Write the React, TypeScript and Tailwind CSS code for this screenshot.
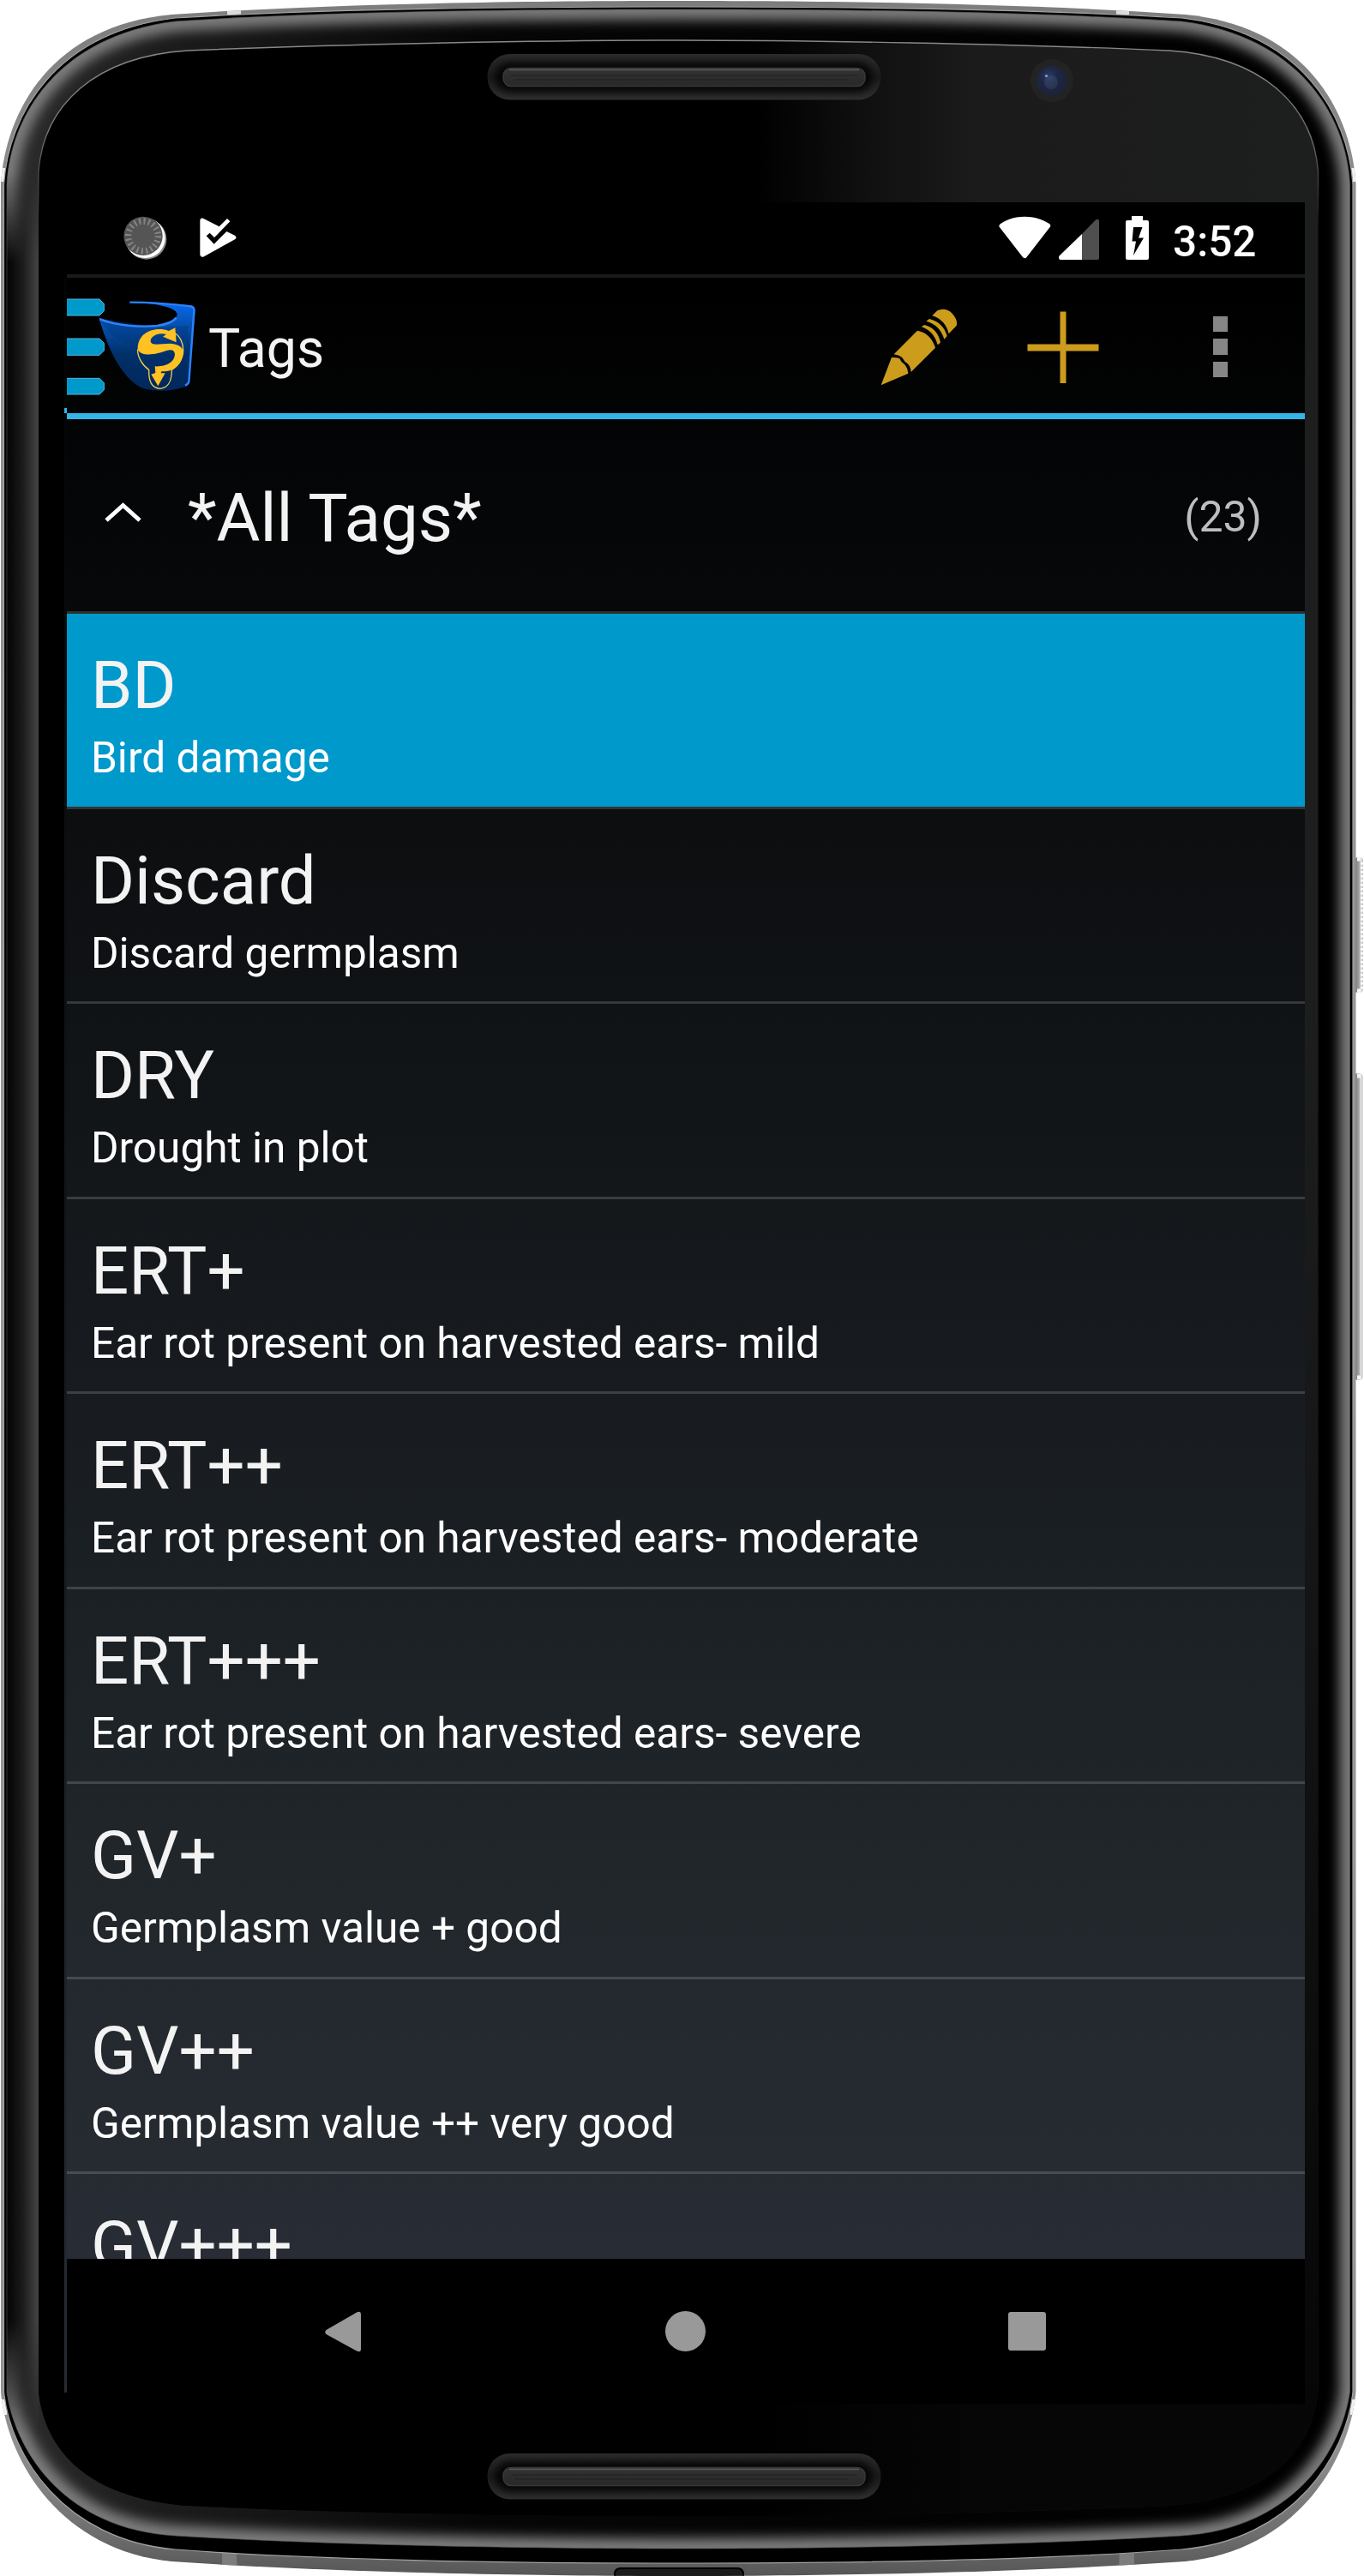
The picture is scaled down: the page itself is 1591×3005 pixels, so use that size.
const tags = [
  { name: "BD", note: "Bird damage", selected: true },
  { name: "Discard", note: "Discard germplasm" },
  { name: "DRY", note: "Drought in plot" },
  { name: "ERT+", note: "Ear rot present on harvested ears- mild" },
  { name: "ERT++", note: "Ear rot present on harvested ears- moderate" },
  { name: "ERT+++", note: "Ear rot present on harvested ears- severe" },
  { name: "GV+", note: "Germplasm value + good" },
  { name: "GV++", note: "Germplasm value ++ very good" },
  { name: "GV+++" },
];

const BODY_WIDTH = 1582.5;

type Point = [number, number];

/* Builds a left/right symmetric outline from the curve points of its left half,
   listed from the left edge to the centre. */
function outline(top: Point[], bottom: Point[]) {
  const flip = ([x, y]: Point): Point => [BODY_WIDTH - x, y];
  const curve = (pts: Point[]) => "C" + pts.map((p) => p.join(",")).join(" ");
  return [
    "M" + top[0].join(","),
    curve(top.slice(1)),
    curve(top.slice(0, -1).reverse().map(flip)),
    "L" + flip(bottom[0]).join(","),
    curve(bottom.slice(1).map(flip)),
    curve(bottom.slice(0, -1).reverse()),
    "Z",
  ].join(" ");
}

const shell = outline(
  [[1, 215], [6, 130], [60, 30], [200, 17], [400, 3], [650, 1], [791, 1]],
  [[1, 2790], [8, 2870], [70, 2975], [200, 2988], [400, 3002], [650, 3005], [791, 3005]],
);
const band = outline(
  [[4.5, 215], [10, 133], [65, 38], [204, 21], [400, 9], [650, 8], [791, 8]],
  [[4.5, 2790], [12, 2865], [75, 2963], [204, 2974], [400, 2989], [650, 2990], [791, 2990]],
);
const bevel = outline(
  [[8, 215], [12, 135], [68, 42], [204, 25], [400, 12], [650, 11], [791, 11]],
  [[8, 2790], [18, 2860], [75, 2950], [204, 2958], [400, 2970], [650, 2973], [791, 2973]],
);
const face = outline(
  [[45, 200], [51, 123], [110, 66], [219, 59], [400, 51], [650, 47], [791, 47]],
  [[45, 2790], [53, 2865], [110, 2915], [219, 2923], [400, 2932], [650, 2935], [791, 2935]],
);

function Speaker({ y }: { y: number }) {
  return (
    <g transform={`translate(0 ${y})`}>
      <rect x="568.5" y="0" width="459" height="53.5" rx="26" fill="url(#slotOuter)" />
      <rect x="577" y="9" width="441" height="36" rx="18" fill="#060606" filter="url(#soft3)" opacity="0.8" />
      <rect x="587" y="16.5" width="422" height="21" rx="9" fill="url(#slotInner)" stroke="#383838" strokeWidth="1.5" />
      <path d="M594 18.5H1002" stroke="#5a5a5a" strokeWidth="1.5" />
      <path d="M596 25H1000M600 30H990" stroke="#202020" strokeWidth="1" />
    </g>
  );
}

function PhoneBody() {
  return (
    <svg className="absolute inset-0" width="1591" height="3005" viewBox="0 0 1591 3005" aria-hidden="true">
      <defs>
        <linearGradient id="metal" x1="0" y1="0" x2="0" y2="1">
          <stop offset="0" stopColor="#7c7e7c" />
          <stop offset="0.06" stopColor="#8a8c8b" />
          <stop offset="0.5" stopColor="#969897" />
          <stop offset="0.95" stopColor="#909090" />
          <stop offset="0.985" stopColor="#6c6c6c" />
          <stop offset="1" stopColor="#565656" />
        </linearGradient>
        <linearGradient id="glass" x1="0" y1="0" x2="1" y2="0">
          <stop offset="0" stopColor="#2c2c2c" />
          <stop offset="0.12" stopColor="#1c1c1c" />
          <stop offset="0.35" stopColor="#060606" />
          <stop offset="1" stopColor="#000" />
        </linearGradient>
        <linearGradient id="leftSide" x1="0" y1="0" x2="1" y2="0">
          <stop offset="0" stopColor="#030303" />
          <stop offset="0.5" stopColor="#1c1c1c" />
          <stop offset="0.95" stopColor="#444" />
          <stop offset="1" stopColor="#333" />
        </linearGradient>
        <linearGradient id="fadeY" x1="0" y1="0" x2="0" y2="1">
          <stop offset="0" stopColor="#fff" stopOpacity="0" />
          <stop offset="0.04" stopColor="#fff" />
          <stop offset="0.95" stopColor="#fff" />
          <stop offset="1" stopColor="#fff" stopOpacity="0" />
        </linearGradient>
        <mask id="leftMask"><rect x="0" y="200" width="60" height="2640" fill="url(#fadeY)" /></mask>
        <linearGradient id="shine" gradientUnits="userSpaceOnUse" x1="880" y1="0" x2="1540" y2="0">
          <stop offset="0" stopColor="#000" />
          <stop offset="0.2" stopColor="#101010" />
          <stop offset="0.4" stopColor="#1b1b1b" />
          <stop offset="1" stopColor="#1d1f1e" />
        </linearGradient>
        <linearGradient id="shade" gradientUnits="userSpaceOnUse" x1="0" y1="1100" x2="0" y2="2800">
          <stop offset="0" stopColor="#000" stopOpacity="0" />
          <stop offset="0.35" stopColor="#000" stopOpacity="0.25" />
          <stop offset="1" stopColor="#000" stopOpacity="0.8" />
        </linearGradient>
        <linearGradient id="hair" gradientUnits="userSpaceOnUse" x1="0" y1="40" x2="0" y2="260">
          <stop offset="0" stopColor="#8a8a8a" />
          <stop offset="0.5" stopColor="#777" />
          <stop offset="1" stopColor="#777" stopOpacity="0" />
        </linearGradient>
        <linearGradient id="edge" x1="0" y1="0" x2="0" y2="1">
          <stop offset="0" stopColor="#020303" />
          <stop offset="1" stopColor="#272c34" />
        </linearGradient>
        <linearGradient id="slotOuter" x1="0" y1="0" x2="0" y2="1">
          <stop offset="0" stopColor="#2c2c2c" />
          <stop offset="0.5" stopColor="#1a1a1a" />
          <stop offset="1" stopColor="#303030" />
        </linearGradient>
        <linearGradient id="slotInner" x1="0" y1="0" x2="0" y2="1">
          <stop offset="0" stopColor="#333" />
          <stop offset="1" stopColor="#282828" />
        </linearGradient>
        <linearGradient id="key" x1="0" y1="0" x2="1" y2="0">
          <stop offset="0" stopColor="#6e6e6e" />
          <stop offset="0.55" stopColor="#a8a8a8" />
          <stop offset="0.8" stopColor="#e8e8e8" />
          <stop offset="1" stopColor="#b5b5b5" />
        </linearGradient>
        <radialGradient id="lens" cx="0.4" cy="0.35" r="0.65">
          <stop offset="0" stopColor="#2a3c68" />
          <stop offset="0.45" stopColor="#1d2745" />
          <stop offset="1" stopColor="#1c2339" />
        </radialGradient>
        <filter id="soft8" filterUnits="userSpaceOnUse" x="-40" y="-40" width="1680" height="3090"><feGaussianBlur stdDeviation="7" /></filter>
        <filter id="soft3" x="-10%" y="-60%" width="120%" height="220%"><feGaussianBlur stdDeviation="4" /></filter>
        <clipPath id="bevelClip"><path d={bevel} /></clipPath>
        <clipPath id="shellClip"><path d={shell} /></clipPath>
      </defs>

      <rect x="1580" y="1000" width="10" height="158" rx="4" fill="url(#key)" />
      <path d="M1588.5 1006V1154" stroke="#fff" strokeWidth="3" strokeDasharray="2.5 2.5" />
      <rect x="1580" y="1252" width="9.5" height="358" rx="4" fill="url(#key)" />
      <path d="M1583 1002h4M1583 1156h4M1583 1255h4M1583 1607h4" stroke="#f4f4f4" strokeWidth="5" />

      <path d={shell} fill="url(#metal)" />
      <g clipPath="url(#shellClip)">
        <path d="M265 6h16v14h-16zM1302 6h15v14h-15z" fill="#dcdcdc" />
        <path d="M0 196h8v16H0zM1575 196h8v16h-8zM0 2799h8v18H0zM1575 2799h8v18h-8z" fill="#f1f1f1" />
        <path d="M259 2970h16l2 30h-18zM1306 2970h17v30h-18z" fill="#858585" opacity="0.8" />
        <path d="M717 3006v-3q0-7 7-7H860q7 0 7 7v3z" fill="#1c1c1c" stroke="#000" strokeWidth="2" />
      </g>
      <path d={band} fill="#000" stroke="#a2a2a2" strokeWidth="1.2" />
      <path d={bevel} fill="url(#glass)" />
      <g clipPath="url(#bevelClip)">
        <path d={bevel} fill="none" stroke="#7d7d7d" strokeWidth="24" filter="url(#soft8)" />
        <rect x="8" y="200" width="38" height="2640" fill="url(#leftSide)" mask="url(#leftMask)" />
      </g>
      <path d={bevel} fill="none" stroke="#5c5c5c" strokeWidth="1" opacity="0.6" />
      <path d={face} fill="url(#shine)" />
      <path d={face} fill="url(#shade)" />
      <path d={face} fill="none" stroke="url(#hair)" strokeWidth="1.4" />

      <Speaker y={63} />
      <Speaker y={2862} />
      <circle cx="1227" cy="94" r="25" fill="#232323" />
      <circle cx="1227" cy="94.5" r="17.5" fill="url(#lens)" />
      <circle cx="1226" cy="96" r="8" fill="#4a5775" opacity="0.35" />
      <circle cx="1220.500" cy="88.500" r="1.600" fill="#8b9fca" />
      <rect x="75" y="324" width="3" height="2467" fill="url(#edge)" />
      <path d="M75 479h3" stroke="#33b5e5" strokeWidth="6" />
    </svg>
  );
}

function StatusBar() {
  return (
    <div className="flex h-[84px] shrink-0 items-start bg-black pt-[16px] pl-[66px] pr-[55px]">
      <svg className="h-[51px] w-[51px]" viewBox="252 66 153 153">
        <circle cx="332" cy="147" r="71" fill="#8a8a8a" />
        <circle cx="328" cy="143" r="70" fill="#fff" />
        <circle cx="321" cy="136" r="68" fill="#555" />
        <circle cx="321" cy="136" r="52" fill="none" stroke="#858585" strokeWidth="22" strokeDasharray="6 10.336" />
      </svg>
      <svg className="mt-[2px] ml-[38px] h-[47px] w-[44px]" viewBox="520 74 132 141">
        <path fill="#fff" d="M521 82Q522 73 532 76L588 105 616 77 626 87 571 143 555 127 543 138 570 166 614 122 643 136Q652 143 643 150L532 211Q522 213 521 204Z" />
      </svg>
      <div className="ml-auto flex items-start">
        <svg className="h-[51px] w-[61px]" viewBox="0 0 61 51">
          <path fill="#fff" d="M.5 12.500Q0 10.500 2 9C18-2 42-2 59 9Q61 10.500 60 12.500L32.500 48Q30.500 50.500 28 48Z" />
        </svg>
        <svg className="ml-[9px] h-[51px] w-[47px]" viewBox="0 0 47 51">
          <path fill="#4f4f4f" d="M27 21L43 4.500Q47 2 47 7V49Q47 51 45 51H27Z" />
          <path fill="#fff" d="M27 21V51H2Q0 51 0 48Q0 47 1 46Z" />
        </svg>
        <svg className="ml-[31px] h-[51px] w-[27px]" viewBox="0 0 27 51">
          <path fill="#fff" fillRule="evenodd" d="M7 0H20V5H25Q27 5 27 7V49Q27 51 25 51H2Q0 51 0 49V7Q0 5 2 5H7ZM9 13L7.500 29.500H12L9 46 21 25.500H15L19.500 13Z" />
        </svg>
        <div className="ml-[28px] w-[99px] text-[49.500px] leading-[60px] font-medium whitespace-nowrap text-white">3:52</div>
      </div>
    </div>
  );
}

function AppBar() {
  return (
    <div className="flex h-[169px] shrink-0 items-start border-t-[4px] border-b-[7px] border-t-[#1a1a1a] border-b-[#33b5e5]">
      <svg className="mt-[23px] h-[114px] w-[150px] shrink-0" viewBox="54 51 450 342">
        <defs>
          <linearGradient id="bucket" x1="0" y1="0" x2="0" y2="1">
            <stop offset="0" stopColor="#0a6af0" />
            <stop offset="0.3" stopColor="#044da8" />
            <stop offset="0.6" stopColor="#012f68" />
            <stop offset="1" stopColor="#01285c" />
          </linearGradient>
        </defs>
        <g fill="#0099cc" stroke="#56b6d6" strokeWidth="3">
          <path d="M40 57H168L184 73V98L168 114H40Z" />
          <path d="M40 195H168L184 211V237L168 253H40Z" />
          <path d="M40 334H168L184 350V375L168 390H40Z" />
        </g>
        <path fill="url(#bucket)" d="M270 66C350 66 430 72 490 79Q504 83 503 96L485 345Q483 358 470 363C420 382 350 380 315 367C240 330 190 210 167 123C230 148 310 155 370 148C412 142 440 125 440 110C438 92 400 74 270 66Z" />
        <path fill="#023473" opacity="0.35" d="M167 123C230 230 320 250 480 250L478 150 370 155Z" />
        <path fill="none" stroke="#2b83fb" strokeWidth="7" strokeLinejoin="round" d="M274 68C350 68 430 75 488 82Q500 86 499 98L481 345Q479 354 468 359" />
        <path fill="none" stroke="#2b83fb" strokeWidth="8" d="M168 127C230 150 310 156 370 150C405 145 428 134 437 122" />
        <path fill="none" stroke="#f2cf4a" strokeWidth="4" d="M302 232C300 260 320 290 341 304C340 345 350 367 380 370C410 367 421 345 421 304C453 282 461 255 461 235C461 210 450 185 428 174" />
        <path fill="#ffc222" d="M302 230C302 180 345 160 385 162Q400 163 411 168L433 157 437 208 390 188 402 180C370 172 345 190 347 205C350 222 385 212 415 212C450 214 460 228 461 242C458 285 430 312 385 310L383 316H398L373 361 349 320 364 315 362 292C400 294 430 280 432 250C430 232 415 233 400 238C370 250 310 262 302 230Z" />
      </svg>
      <div className="mt-[43px] ml-[15px] text-[62.500px] leading-[80px] text-[#f3f3f3]">Tags</div>
      <svg className="mt-[36px] ml-auto h-[90px] w-[90px] shrink-0" viewBox="36 43 270 270" fill="#cc9c1c">
        <path d="M38 311L75 214Q92 213 103 218Q106 228 120 238Q131 250 133 270Z" />
        <path d="M83 203L165 120Q211 128 228 180L143 265Q141 245 131 236Q121 230 111 213Q100 205 83 203Z" />
        <path d="M179 107L190 100Q236 112 246 162L236 170Q222 120 179 107Z" />
        <path d="M196 87L207 79Q256 92 269 139L259 150Q244 100 196 87Z" />
        <path d="M217 68L235 50Q262 38 285 58Q308 82 302 103L275 131Q263 82 217 68Z" />
      </svg>
      <svg className="mt-[39px] ml-[81px] h-[84px] w-[84px] shrink-0" viewBox="0 0 84 84" fill="#cc9c1c">
        <path d="M38.500 0.500H45.500V38.500H83.500V46.500H45.500V84H38.500V46.500H.5V38.500H38.500Z" />
      </svg>
      <div className="mt-[45px] mr-[90px] ml-[133px] flex shrink-0 flex-col gap-[8px]">
        <div className="h-[18.300px] w-[17px] bg-[#868686]" />
        <div className="h-[18.300px] w-[17px] bg-[#868686]" />
        <div className="h-[18.300px] w-[17px] bg-[#868686]" />
      </div>
    </div>
  );
}

function NavBar() {
  return (
    <div className="flex h-[169px] shrink-0 items-start bg-black pt-[61px] pl-[301px]">
      <svg className="h-[48px] w-[42px]" viewBox="0 0 42 48">
        <path fill="#999" d="M1.500 22L37 1.500Q42-1 42 4V44Q42 49 37 46.500L1.500 27Q-1 24.500 1.500 22Z" />
      </svg>
      <div className="ml-[355px] h-[47px] w-[47px] rounded-full bg-[#999]" />
      <div className="mt-[1px] ml-[353px] h-[45px] w-[44px] rounded-[3px] bg-[#999]" />
    </div>
  );
}

export default function App() {
  return (
    <div className="relative h-[3005px] w-[1591px] overflow-hidden bg-white pt-[236px] pl-[78px] font-[Roboto,sans-serif]">
      <PhoneBody />
      <main className="relative flex h-[2568px] w-[1444px] flex-col overflow-hidden bg-black">
        <StatusBar />
        <div className="flex min-h-0 flex-1 flex-col overflow-hidden bg-[linear-gradient(to_bottom,#000000_0%,#040506_10%,#0c0e10_27%,#171b1f_55%,#20262a_80%,#282d35_100%)]">
          <AppBar />
          <div className="flex h-[224px] shrink-0 items-start">
            <svg className="mt-[97px] ml-[44px] h-[24px] w-[43px]" viewBox="0 0 43 24">
              <path d="M2 21L21.500 3.500 41 21" fill="none" stroke="#fff" strokeWidth="5" />
            </svg>
            <div className="mt-[71px] ml-[54px] text-[78px] leading-[90px] whitespace-nowrap text-[#f3f3f3]">*All Tags*</div>
            <div className="mt-[84px] mr-[50px] ml-auto text-[50px] leading-[60px] text-[#bebebe]">(23)</div>
          </div>
          <ul className="shrink-0">
            {tags.map((tag) => (
              <li
                key={tag.name}
                className={
                  "h-[227.500px] border-t-[3px] bg-clip-padding pt-[39px] pl-[28px] whitespace-nowrap border-white/16 " +
                  (tag.selected ? "bg-[#0099cc]" : "")
                }
              >
                <div className="text-[77.800px] leading-[90px] text-[#f3f3f3]">{tag.name}</div>
                <div className="mt-[10px] text-[49.550px] leading-[58px] text-white">{tag.note}</div>
              </li>
            ))}
          </ul>
        </div>
        <NavBar />
      </main>
    </div>
  );
}
